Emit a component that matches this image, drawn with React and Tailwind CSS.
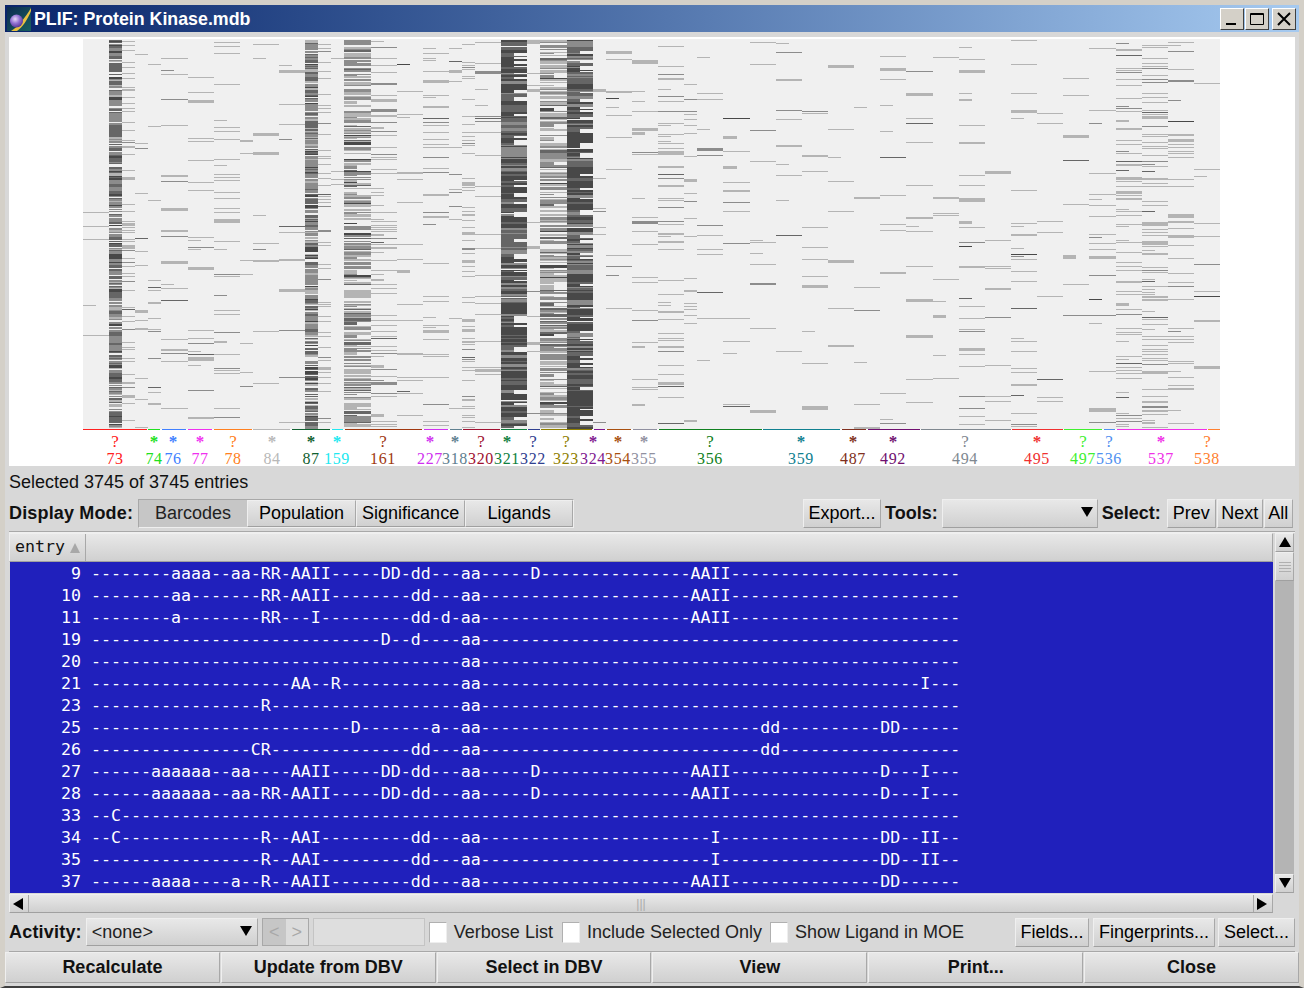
import React, { useMemo } from "react";

const BITS = 87;
const CHART_LEFT = 83;
const BIT_W = 13.07;

// coverage per fingerprint bit, read off the picture by eye
const DENSITY = [
  0.03, 0.03, 0.8, 0.25, 0.06, 0.05, 0.09, 0.09, 0.16, 0.16, 0.12, 0.12, 0.05, 0.05, 0.05, 0.05, 0.15, 0.78, 0.24, 0.04,
  0.6, 0.6, 0.35, 0.35, 0.08, 0.04, 0.14, 0.14, 0.05, 0.25, 0.1, 0.1, 0.97, 0.97, 0.05, 0.62, 0.62, 0.98, 0.98, 0.05,
  0.05, 0.05, 0.13, 0.13, 0.2, 0.2, 0.08, 0.1, 0.1, 0.05, 0.05, 0.04, 0.04, 0.04, 0.04, 0.04, 0.04, 0.03, 0.03, 0.04,
  0.08, 0.08, 0.06, 0.06, 0.05, 0.03, 0.05, 0.13, 0.13, 0.04, 0.04, 0.13, 0.13, 0.04, 0.04, 0.05, 0.05, 0.06, 0.05, 0.32,
  0.32, 0.45, 0.45, 0.18, 0.18, 0.06, 0.06,
];

const DARK = { 2: 1, 17: 1, 32: 2, 33: 2, 37: 2, 38: 2, 35: 0.6, 36: 0.6, 20: 0.4, 21: 0.4 };

const COLUMNS = [
  { n: "73", mark: "?", c: "#ff2020", a: 83, b: 147, x: 115 },
  { n: "74", mark: "*", c: "#20e020", a: 148, b: 160, x: 154 },
  { n: "76", mark: "*", c: "#4080ff", a: 162, b: 186, x: 173 },
  { n: "77", mark: "*", c: "#f030f0", a: 188, b: 212, x: 200 },
  { n: "78", mark: "?", c: "#ff8020", a: 214, b: 252, x: 233 },
  { n: "84", mark: "*", c: "#b8b8b8", a: 253, b: 290, x: 272 },
  { n: "87", mark: "*", c: "#106030", a: 292, b: 330, x: 311 },
  { n: "159", mark: "*", c: "#20e8f0", a: 332, b: 343, x: 337 },
  { n: "161", mark: "?", c: "#a03810", a: 345, b: 422, x: 383 },
  { n: "227", mark: "*", c: "#d030f0", a: 424, b: 448, x: 430 },
  { n: "318", mark: "*", c: "#608090", a: 450, b: 462, x: 455 },
  { n: "320", mark: "?", c: "#a01030", a: 463, b: 500, x: 481 },
  { n: "321", mark: "*", c: "#108040", a: 501, b: 527, x: 507 },
  { n: "322", mark: "?", c: "#304090", a: 528, b: 540, x: 533 },
  { n: "323", mark: "?", c: "#908000", a: 541, b: 592, x: 566 },
  { n: "324", mark: "*", c: "#801890", a: 594, b: 605, x: 593 },
  { n: "354", mark: "*", c: "#a85010", a: 607, b: 631, x: 618 },
  { n: "355", mark: "*", c: "#9090a0", a: 633, b: 657, x: 644 },
  { n: "356", mark: "?", c: "#108020", a: 659, b: 762, x: 710 },
  { n: "359", mark: "*", c: "#108090", a: 763, b: 840, x: 801 },
  { n: "487", mark: "*", c: "#803020", a: 842, b: 866, x: 853 },
  { n: "492", mark: "*", c: "#701070", a: 868, b: 920, x: 893 },
  { n: "494", mark: "?", c: "#808890", a: 921, b: 1011, x: 965 },
  { n: "495", mark: "*", c: "#f03030", a: 1012, b: 1063, x: 1037 },
  { n: "497", mark: "?", c: "#40f030", a: 1064, b: 1102, x: 1083 },
  { n: "536", mark: "?", c: "#5090f0", a: 1104, b: 1115, x: 1109 },
  { n: "537", mark: "*", c: "#f030e8", a: 1117, b: 1207, x: 1161 },
  { n: "538", mark: "?", c: "#ff8030", a: 1208, b: 1220, x: 1207 },
];

function fp(parts) {
  const chars = new Array(BITS).fill("-");
  for (const [at, s] of parts) {
    for (let i = 0; i < s.length; i++) chars[at + i] = s[i];
  }
  return chars.join("");
}

const ROWS = [
  [9, fp([[8, "aaaa"], [14, "aa"], [17, "RR"], [20, "AAII"], [29, "DD"], [32, "dd"], [37, "aa"], [44, "D"], [60, "AAII"]])],
  [10, fp([[8, "aa"], [17, "RR"], [20, "AAII"], [32, "dd"], [37, "aa"], [60, "AAII"]])],
  [11, fp([[8, "a"], [17, "RR"], [22, "I"], [32, "dd"], [35, "d"], [37, "aa"], [60, "AAII"]])],
  [19, fp([[29, "D"], [32, "d"], [37, "aa"]])],
  [20, fp([[37, "aa"]])],
  [21, fp([[20, "AA"], [24, "R"], [37, "aa"], [83, "I"]])],
  [23, fp([[17, "R"], [37, "aa"]])],
  [25, fp([[26, "D"], [34, "a"], [37, "aa"], [67, "dd"], [79, "DD"]])],
  [26, fp([[16, "CR"], [32, "dd"], [37, "aa"], [67, "dd"]])],
  [27, fp([[6, "aaaaaa"], [14, "aa"], [20, "AAII"], [29, "DD"], [32, "dd"], [37, "aa"], [44, "D"], [60, "AAII"], [79, "D"], [83, "I"]])],
  [28, fp([[6, "aaaaaa"], [14, "aa"], [17, "RR"], [20, "AAII"], [29, "DD"], [32, "dd"], [37, "aa"], [44, "D"], [60, "AAII"], [79, "D"], [83, "I"]])],
  [33, fp([[2, "C"]])],
  [34, fp([[2, "C"], [17, "R"], [20, "AAI"], [32, "dd"], [37, "aa"], [62, "I"], [79, "DD"], [83, "II"]])],
  [35, fp([[17, "R"], [20, "AAI"], [32, "dd"], [37, "aa"], [62, "I"], [79, "DD"], [83, "II"]])],
  [37, fp([[6, "aaaa"], [14, "a"], [17, "R"], [20, "AAII"], [32, "dd"], [37, "aa"], [60, "AAII"], [79, "DD"]])],
];

function rng(seed) {
  let s = seed;
  return () => {
    s = (s * 1664525 + 1013904223) >>> 0;
    return s / 4294967296;
  };
}

function pickTone(r, dark, h) {
  const v = r();
  if (dark >= 2) return v < 0.5 ? 3 : v < 0.82 ? 2 : 1;
  if (dark >= 1) return v < 0.12 ? 3 : v < 0.42 ? 2 : v < 0.85 ? 1 : 0;
  if (dark > 0) return v < 0.03 ? 3 : v < 0.15 ? 2 : v < 0.55 ? 1 : 0;
  if (h > 1) return v < 0.12 ? 1 : 0;
  return v < 0.01 ? 3 : v < 0.05 ? 2 : v < 0.2 ? 1 : 0;
}

function pickHeight(r, d) {
  const v = r();
  if (d > 0.9) return v < 0.45 ? 1 : v < 0.8 ? 2 : 3;
  if (d > 0.5) return v < 0.6 ? 1 : v < 0.85 ? 2 : 3;
  if (v < 0.84) return 1;
  if (v < 0.92) return 2;
  return v < 0.98 ? 3 : 4;
}

function Barcodes() {
  const paths = useMemo(() => {
    const r = rng(73);
    const names = ["#b4b4b4", "#8c8c8c", "#666666", "#484848"];
    const out = ["", "", "", ""];
    // hits of one residue span two bits most of the time
    for (let i = 0; i < BITS; ) {
      const single = [2, 3, 4, 5, 12, 17, 18, 19, 28, 29, 34, 39, 46].includes(i);
      const span = single ? 1 : 2;
      const d = DENSITY[i];
      const dark = DARK[i] || 0;
      const hit = d >= 0.5 ? d : d * 0.6;
      let y = 40;
      while (y < 428) {
        if (r() < hit) {
          const h = Math.min(pickHeight(r, d), 429 - y);
          const bits = span === 2 && r() < 0.18 ? 1 : span;
          const x = Math.round(CHART_LEFT + i * BIT_W);
          const x2 = Math.round(CHART_LEFT + (i + bits) * BIT_W);
          out[pickTone(r, dark, h)] += `M${x} ${y}H${x2}V${y + h}H${x}Z`;
          y += h + (d >= 0.5 ? 0 : 1);
        } else {
          y += 1;
        }
      }
      i += span;
    }
    return names.map((c, i) => [c, out[i]]);
  }, []);

  return (
    <svg width="1286" height="429" viewBox="9 37 1286 429" className="block bg-white">
      <rect x="83" y="39" width="1137" height="390" fill="#f0f0f0" />
      {paths.map(([c, d]) => (
        <path key={c} d={d} fill={c} shapeRendering="crispEdges" />
      ))}
      {COLUMNS.map((col) => (
        <g key={col.n} fill={col.c} textAnchor="middle" style={{ fontFamily: '"Liberation Serif", serif' }}>
          <rect x={col.a} y="429" width={col.b - col.a} height="1" />
          {col.mark === "?" ? (
            <text x={col.x} y="447" fontSize="17">?</text>
          ) : (
            <text x={col.x} y="447" fontSize="17" fontWeight="700">*</text>
          )}
          <text x={col.x} y="464" fontSize="16" letterSpacing="0.6">{col.n}</text>
        </g>
      ))}
    </svg>
  );
}

const raised =
  "border border-t-[#efefef] border-l-[#efefef] border-r-[#a8a8a8] border-b-[#a0a0a0] bg-linear-to-b from-[#e8e8e8] to-[#d0d0d0]";

function Btn({ children, className = "" }) {
  return (
    <div className={`flex h-[29px] items-center justify-center text-black ${raised} ${className}`}>{children}</div>
  );
}

function Tri({ dir }) {
  const pts = { up: "0,10 6,0 12,10", down: "0,0 12,0 6,10", left: "10,0 10,12 0,6", right: "0,0 0,12 10,6" }[dir];
  return (
    <svg width="12" height="12" viewBox="0 0 12 12">
      <polygon points={pts} fill="#000" />
    </svg>
  );
}

function Check({ label, className = "" }) {
  return (
    <div className={`flex items-center gap-[7px] ${className}`}>
      <div className="h-[21px] w-[18px] border border-t-[#b0b0b0] border-l-[#b0b0b0] border-r-[#eee] border-b-[#eee] bg-white" />
      <span className="text-[#222]">{label}</span>
    </div>
  );
}

function AppIcon() {
  return (
    <svg width="24" height="24" viewBox="0 0 24 24" className="block">
      <defs>
        <linearGradient id="iconBg" x1="0" y1="0" x2="1" y2="1">
          <stop offset="0" stopColor="#0c2a50" />
          <stop offset="1" stopColor="#186060" />
        </linearGradient>
        <radialGradient id="iconBall" cx="0.4" cy="0.35" r="0.7">
          <stop offset="0" stopColor="#e8d8f8" />
          <stop offset="0.5" stopColor="#9070d0" />
          <stop offset="1" stopColor="#503090" />
        </radialGradient>
      </defs>
      <rect width="24" height="24" fill="url(#iconBg)" />
      <path d="M4 24 C11 20 18 11 24 1 L24 4 C21 12 15 21 10 24 Z" fill="#e8c040" />
      <circle cx="9.5" cy="14" r="6.5" fill="url(#iconBall)" />
    </svg>
  );
}

function TitleBtn({ children }) {
  return (
    <div className="flex h-[22px] w-[24px] items-center justify-center border border-t-white border-l-white border-r-[#404040] border-b-[#404040] bg-[#d4d0c8]">
      {children}
    </div>
  );
}

export default function App() {
  const sans = { fontFamily: '"Liberation Sans", Arial, sans-serif' };
  return (
    <div
      className="flex h-[988px] w-[1304px] flex-col overflow-hidden border-b-2 border-b-[#404040] border-x-[5px] border-t-[5px] border-x-[#d4d0c8] border-t-[#d4d0c8] bg-[#d8d8d8] text-[18px] leading-none"
      style={sans}
    >
      <div className="flex h-[27px] shrink-0 items-center bg-linear-to-r from-[#0a246a] to-[#a6caf0] pl-[2px] pr-[3px]">
        <AppIcon />
        <span className="ml-[3px] mt-[2px] text-[17.8px] font-bold text-white">PLIF: Protein Kinase.mdb</span>
        <div className="ml-auto flex gap-[1px]">
          <TitleBtn>
            <svg width="14" height="14" viewBox="0 0 14 14"><rect x="1" y="11" width="10" height="2" fill="#000" /></svg>
          </TitleBtn>
          <TitleBtn>
            <svg width="16" height="14" viewBox="0 0 16 14"><path d="M1.5 1.5h13v11h-13z M1 2.5h14" fill="none" stroke="#000" /></svg>
          </TitleBtn>
          <div className="w-[1px]" />
          <TitleBtn>
            <svg width="14" height="14" viewBox="0 0 14 14"><path d="M1 1L13 13M13 1L1 13" stroke="#000" strokeWidth="2" /></svg>
          </TitleBtn>
        </div>
      </div>

      <div className="flex min-h-0 flex-1 flex-col px-[4px]">
        <div className="mt-[5px] shrink-0">
          <Barcodes />
        </div>

        <div className="flex h-[32px] shrink-0 items-center text-[#111]">Selected 3745 of 3745 entries</div>

        <div className="flex h-[30px] shrink-0 items-center">
          <span className="mr-[5px] font-bold tracking-[0.16px] text-[#111]">Display Mode:</span>
          <div className="flex border border-t-[#a8a8a8] border-l-[#a8a8a8] border-r-[#efefef] border-b-[#efefef]">
            <div className="flex h-[27px] w-[108px] items-center justify-center bg-[#c6c6c6] text-[#222]">Barcodes</div>
            <div className={`flex h-[27px] w-[109px] items-center justify-center ${raised}`}>Population</div>
            <div className={`flex h-[27px] w-[109px] items-center justify-center ${raised}`}>Significance</div>
            <div className={`flex h-[27px] w-[108px] items-center justify-center ${raised}`}>Ligands</div>
          </div>
          <Btn className="ml-[229px] w-[78px]">Export...</Btn>
          <span className="ml-[4px] font-bold text-[#111]">Tools:</span>
          <div className={`ml-[4px] flex h-[29px] w-[156px] items-center justify-end pr-[4px] ${raised}`}>
            <Tri dir="down" />
          </div>
          <span className="ml-[4px] font-bold text-[#111]">Select:</span>
          <Btn className="ml-[6px] w-[49px]">Prev</Btn>
          <Btn className="ml-[1px] w-[46px]">Next</Btn>
          <Btn className="ml-[1px] w-[29px]">All</Btn>
        </div>

        <div className="mt-[3px] h-[2px] shrink-0 border-b border-b-[#efefef] bg-[#a8a8a8]" />

        <div className="flex min-h-0 shrink-0">
          <div className="flex w-[1264px] flex-col">
            <div className={`flex h-[29px] shrink-0 ${raised}`}>
              <div className="flex w-[76px] items-center border-r border-r-[#a8a8a8] pl-[5px] text-[16.6px] font-bold" style={{ fontFamily: '"DejaVu Sans Mono", monospace' }}>
                <span className="mr-[5px] font-medium text-[#111]">entry</span>
                <svg width="10" height="10" viewBox="0 0 10 10"><polygon points="0,10 5,0 10,10" fill="#a8a8a8" /></svg>
              </div>
            </div>
            <div
              className="ml-[1px] h-[331px] overflow-hidden bg-[#2020bc] pt-[1px] text-[16.6px] leading-[22px] text-white"
              style={{ fontFamily: '"DejaVu Sans Mono", monospace' }}
            >
              {ROWS.map(([id, s]) => (
                <div key={id} className="flex h-[22px] items-center">
                  <span className="w-[71px] shrink-0 text-right">{id}</span>
                  <span className="ml-[10px] whitespace-pre">{s}</span>
                </div>
              ))}
            </div>
            <div className={`mt-[1px] flex h-[19px] shrink-0 items-center justify-between ${raised}`}>
              <div className="flex h-full w-[19px] items-center justify-center border-r border-r-[#a8a8a8]"><Tri dir="left" /></div>
              <span className="text-[12px] leading-none text-[#aaa]">|||</span>
              <div className="flex h-full w-[19px] items-center justify-center border-l border-l-[#a8a8a8]"><Tri dir="right" /></div>
            </div>
          </div>
          <div className="ml-[2px] flex h-[360px] w-[19px] flex-col bg-[#b4b4b4]">
            <div className={`flex h-[19px] w-full items-center justify-center ${raised}`}><Tri dir="up" /></div>
            <div className={`flex h-[29px] w-full flex-col items-center justify-center gap-[2px] ${raised}`}>
              <div className="h-[1px] w-[12px] bg-[#b0b0b0]" />
              <div className="h-[1px] w-[12px] bg-[#b0b0b0]" />
              <div className="h-[1px] w-[12px] bg-[#b0b0b0]" />
              <div className="h-[1px] w-[12px] bg-[#b0b0b0]" />
            </div>
            <div className="flex-1" />
            <div className={`flex h-[19px] w-full items-center justify-center ${raised}`}><Tri dir="down" /></div>
          </div>
        </div>

        <div className="mt-[5px] flex h-[28px] shrink-0 items-center">
          <span className="font-bold tracking-[0.2px] text-[#111]">Activity:</span>
          <div className={`ml-[4px] flex h-[28px] w-[172px] items-center justify-between px-[5px] text-[#222] ${raised}`}>
            <span>&lt;none&gt;</span>
            <Tri dir="down" />
          </div>
          <div className="ml-[4px] flex h-[28px] border border-[#a8a8a8]">
            <div className="flex w-[23px] items-center justify-center bg-[#c6c6c6] text-[#a8a8a8]">&lt;</div>
            <div className="flex w-[22px] items-center justify-center bg-[#dcdcdc] text-[#a8a8a8]">&gt;</div>
          </div>
          <div className="ml-[4px] h-[28px] w-[112px] border border-[#c4c4c4] bg-[#dedede]" />
          <Check label="Verbose List" className="ml-[4px]" />
          <Check label="Include Selected Only" className="ml-[9px]" />
          <Check label="Show Ligand in MOE" className="ml-[8px]" />
          <Btn className="ml-auto h-[28px] w-[74px]">Fields...</Btn>
          <Btn className="ml-[4px] h-[28px] w-[122px]">Fingerprints...</Btn>
          <Btn className="ml-[3px] h-[28px] w-[77px]">Select...</Btn>
        </div>

        <div className="mt-[5px] h-[1px] shrink-0 bg-[#a8a8a8]" />
        <div className="-mx-[4px] flex h-[31px] shrink-0 gap-[1px]">
          {["Recalculate", "Update from DBV", "Select in DBV", "View", "Print...", "Close"].map((t) => (
            <div key={t} className={`flex flex-1 items-center justify-center pb-[2px] font-bold text-[#111] ${raised}`}>{t}</div>
          ))}
        </div>
      </div>
    </div>
  );
}
